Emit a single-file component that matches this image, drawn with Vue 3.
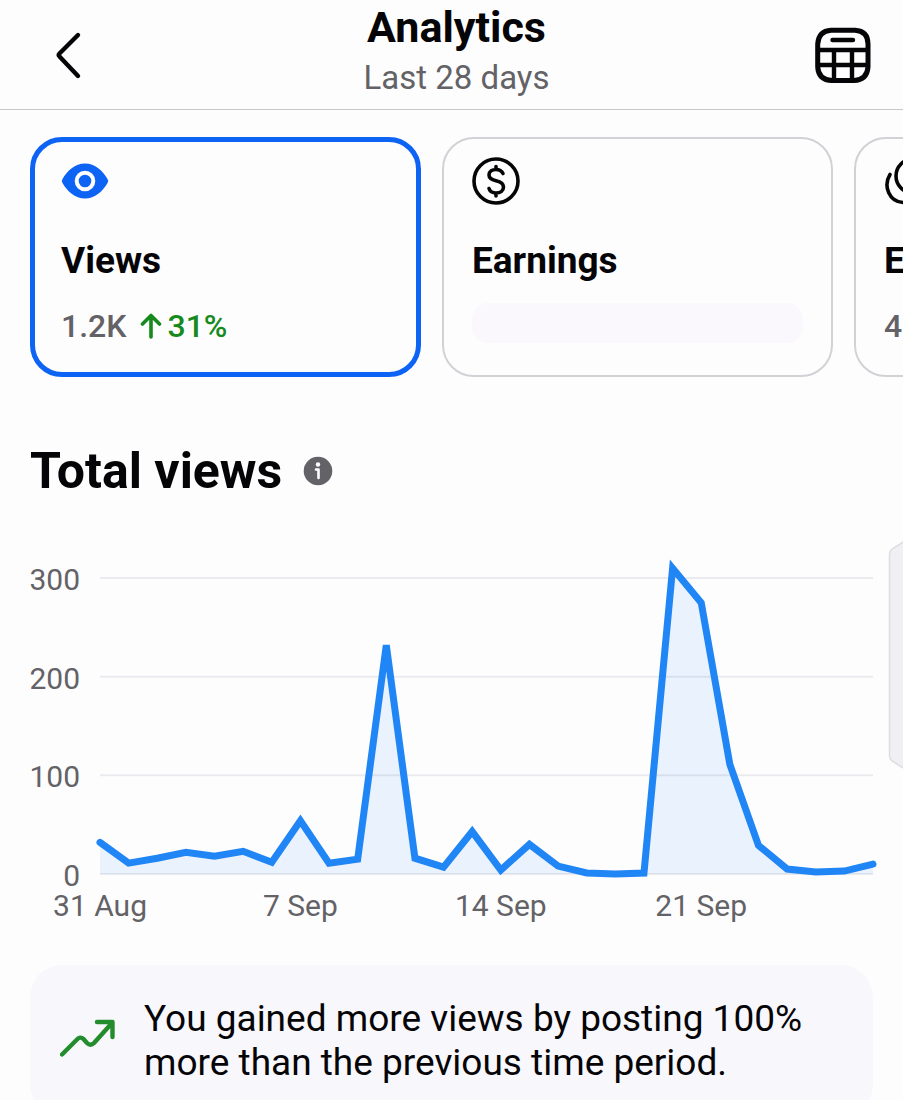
<script setup>
import { ref } from 'vue'

const selected = ref('views')

const views = [
  32, 11, 16, 22, 18, 23, 12, 54, 11, 15, 232, 16, 7, 43,
  4, 30, 8, 1, 0, 1, 310, 275, 111, 29, 5, 2, 3, 10
]
const days = [
  { index: 0, label: '31 Aug' },
  { index: 7, label: '7 Sep' },
  { index: 14, label: '14 Sep' },
  { index: 21, label: '21 Sep' }
]
const ticks = [300, 200, 100, 0]

const plotHeight = 320
const last = views.length - 1
const y = (value) => plotHeight - (value / 300) * 296
const points = views.map((v, i) => `${(i / last) * 1000},${y(v)}`).join(' ')
const area = `0,${plotHeight} ${points} 1000,${plotHeight}`
const xPercent = (i) => `${(i / last) * 100}%`
</script>

<template>
  <main class="page">
    <header class="header">
      <button class="icon-button back" type="button" aria-label="Back">
        <svg width="58" height="58" viewBox="0 0 58 58" fill="none" stroke="#050507" stroke-width="4.4" stroke-linecap="round" stroke-linejoin="round">
          <path d="M38 9 L19.500 27.500 Q18 29 19.500 30.500 L38 50" />
        </svg>
      </button>
      <div class="heading">
        <h1>Analytics</h1>
        <p>Last 28 days</p>
      </div>
      <button class="icon-button" type="button" aria-label="Choose dates">
        <svg width="56" height="56" viewBox="0 0 56 56" fill="none" stroke="#050507" stroke-width="4.4">
          <path d="M16 3.200 H40 Q53 4 53 17 V40 Q52 53 39 53.500 H17 Q3.500 53 2.700 40 V17 Q3.500 4 16 3.200 Z" stroke-width="5" />
          <path d="M3 23 H53 M3 38 H53 M19 23 V53 M37 23 V53" />
          <path d="M17.500 13 H38" stroke-linecap="round" />
        </svg>
      </button>
    </header>

    <nav class="cards" aria-label="Metrics">
      <button class="card" :class="{ active: selected === 'views' }" type="button" @click="selected = 'views'">
        <svg class="card-icon" viewBox="0 0 48 48">
          <path d="M1.500 22 C6 14 14 6.500 24 6.500 C34 6.500 42 14 46.500 22 Q48 24 46.500 26 C42 34 34 41.500 24 41.500 C14 41.500 6 34 1.500 26 Q0 24 1.500 22 Z" fill="#0d63f3" />
          <circle cx="24" cy="24" r="8.300" fill="none" stroke="#fefdfe" stroke-width="4" />
        </svg>
        <span class="card-title">Views</span>
        <span class="card-value">
          1.2K
          <span class="change">
            <svg width="22" height="26" viewBox="0 0 22 26" fill="none" stroke="#168a1d" stroke-width="3.6" stroke-linecap="round" stroke-linejoin="round">
              <path d="M11 24 V3 M2.500 11 L11 2.500 L19.500 11" />
            </svg>31%
          </span>
        </span>
      </button>

      <button class="card" :class="{ active: selected === 'earnings' }" type="button" @click="selected = 'earnings'">
        <svg class="card-icon" viewBox="0 0 48 48" fill="none" stroke="#050507" stroke-width="3.600" stroke-linecap="round">
          <circle cx="24" cy="24" r="22" />
          <path d="M31 16.500 C29.500 13.500 27 12.500 24 12.500 C20 12.500 17 14.500 17 18 C17 21.500 20 22.800 24 23.800 C28.500 24.900 31.500 26.500 31.500 30 C31.500 33.500 28.500 36 24 36 C20.500 36 18 34.500 17 31.500 M24 9.500 V12 M24 36 V39" />
        </svg>
        <span class="card-title">Earnings</span>
        <span class="placeholder"></span>
      </button>

      <button class="card" :class="{ active: selected === 'engagement' }" type="button" @click="selected = 'engagement'">
        <svg class="card-icon" viewBox="0 0 48 48" fill="none" stroke="#050507" stroke-width="3.600" stroke-linecap="round">
          <circle cx="29" cy="19" r="17" />
          <path d="M6 17.500 C-1 29 5 45.500 20 45.500 C24 45.500 28 44 31 42" />
        </svg>
        <span class="card-title">Engagement</span>
        <span class="card-value">4</span>
      </button>
    </nav>

    <section class="total">
      <div class="total-head">
        <h2>Total views</h2>
        <button class="icon-button" type="button" aria-label="About total views">
          <svg width="30" height="30" viewBox="0 0 30 30">
            <circle cx="15" cy="15" r="14.300" fill="#636267" />
            <circle cx="15" cy="8.500" r="2.200" fill="#fefdfe" />
            <path d="M13 13.500 H15.500 V22" fill="none" stroke="#fefdfe" stroke-width="2.6" stroke-linecap="round" stroke-linejoin="round" />
          </svg>
        </button>
      </div>

      <svg class="chart" role="img" aria-label="Total views by day">
        <line v-for="t in ticks" :key="t" class="grid-line" x1="0" x2="100%" :y1="y(t)" :y2="y(t)" />
        <text v-for="t in ticks" :key="'l' + t" x="-20" :y="y(t) + 12" text-anchor="end">{{ t }}</text>
        <svg class="plot" width="100%" :height="plotHeight" :viewBox="`0 0 1000 ${plotHeight}`" preserveAspectRatio="none">
          <polygon class="area" :points="area" />
          <polyline class="line" :points="points" vector-effect="non-scaling-stroke" />
        </svg>
        <text v-for="d in days" :key="d.label" :x="xPercent(d.index)" :y="plotHeight + 42" text-anchor="middle">{{ d.label }}</text>
      </svg>
    </section>

    <aside class="insight">
      <svg width="56" height="44" viewBox="0 0 56 44" fill="none" stroke="#238c2d" stroke-width="4.4" stroke-linecap="round" stroke-linejoin="round">
        <path d="M2 35.500 L17 20.500 Q20 17 23.500 20 L27 24 Q30.500 27.500 34 24 L52 4 M37 3 H52.500 V18" />
      </svg>
      <p>You gained more views by posting 100% more than the previous time period.</p>
    </aside>

    <svg class="side-tab" width="15" height="228" viewBox="0 0 15 228" aria-hidden="true">
      <path d="M17 0 L4 8 Q1.500 10 1.500 13 V215 Q1.500 218 4 220 L17 228" fill="#f0eff1" stroke="#dddce0" stroke-width="1.500" />
    </svg>
  </main>
</template>

<style>
body {
  background: #fefdfe;
}
</style>

<style scoped>
.page {
  position: relative;
  box-sizing: border-box;
  height: 100vh;
  overflow: hidden auto;
  scrollbar-width: none;
  background: #fefdfe;
  color: #050507;
  font-family: Roboto, "Liberation Sans", sans-serif;
}
h1, h2, p {
  margin: 0;
}
button {
  font: inherit;
  color: inherit;
  cursor: pointer;
}
.icon-button {
  display: flex;
  padding: 0;
  border: 0;
  background: none;
}
.header {
  display: flex;
  align-items: center;
  height: 109px;
  padding: 0 32px 0 40px;
  border-bottom: 1px solid #c8c7cb;
}
.heading {
  flex: 1;
  text-align: center;
}
.header .icon-button {
  flex: none;
}
h1 {
  font-size: 43px;
  line-height: 52px;
  font-weight: 700;
}
.heading p {
  font-size: 33px;
  line-height: 50px;
  color: #636267;
  padding-bottom: 6px;
}
.cards {
  display: flex;
  gap: 21px;
  padding: 27px 30px 0;
  overflow: hidden;
}
.card {
  flex: 0 0 391px;
  box-sizing: border-box;
  display: flex;
  flex-direction: column;
  align-items: flex-start;
  height: 240px;
  padding: 18px 28px;
  border: 2px solid #d2d1d5;
  border-radius: 32px;
  background: none;
  text-align: left;
}
.card.active {
  padding: 15px 26px;
  border: 5px solid #0d63f3;
}
.card-icon {
  flex: none;
  width: 48px;
  height: 48px;
}
.card-title {
  margin-top: 32px;
  font-size: 37px;
  line-height: 48px;
  font-weight: 700;
}
.card-value {
  display: flex;
  gap: 14px;
  margin-top: 18px;
  font-size: 32px;
  line-height: 46px;
  font-weight: 500;
  color: #636267;
}
.change {
  display: flex;
  align-items: center;
  gap: 5px;
  color: #168a1d;
}
.placeholder {
  align-self: stretch;
  height: 40px;
  margin-top: 18px;
  border-radius: 16px;
  background: #faf8fc;
}
.total {
  padding: 64px 30px 0;
}
.total-head {
  display: flex;
  align-items: center;
  gap: 21px;
}
h2 {
  font-size: 50px;
  line-height: 60px;
  font-weight: 700;
}
.chart {
  display: block;
  width: calc(100% - 70px);
  height: 372px;
  margin: 53px 0 0 70px;
  overflow: visible;
  font-size: 30px;
  fill: #636267;
}
.plot {
  overflow: visible;
}
.grid-line {
  stroke: #ebeaee;
  stroke-width: 2px;
}
.area {
  fill: #1c82f5;
  fill-opacity: 0.09;
}
.line {
  fill: none;
  stroke: #2186f5;
  stroke-width: 7px;
  stroke-linecap: round;
  stroke-linejoin: miter;
}
.insight {
  display: flex;
  align-items: center;
  gap: 28px;
  margin: 39px 30px 0;
  padding: 32px 30px;
  border-radius: 32px;
  background: #f8f7fc;
}
.insight svg {
  flex: none;
}
.insight p {
  font-size: 37px;
  line-height: 44px;
}
.side-tab {
  position: absolute;
  top: 541px;
  right: 0;
}
</style>
